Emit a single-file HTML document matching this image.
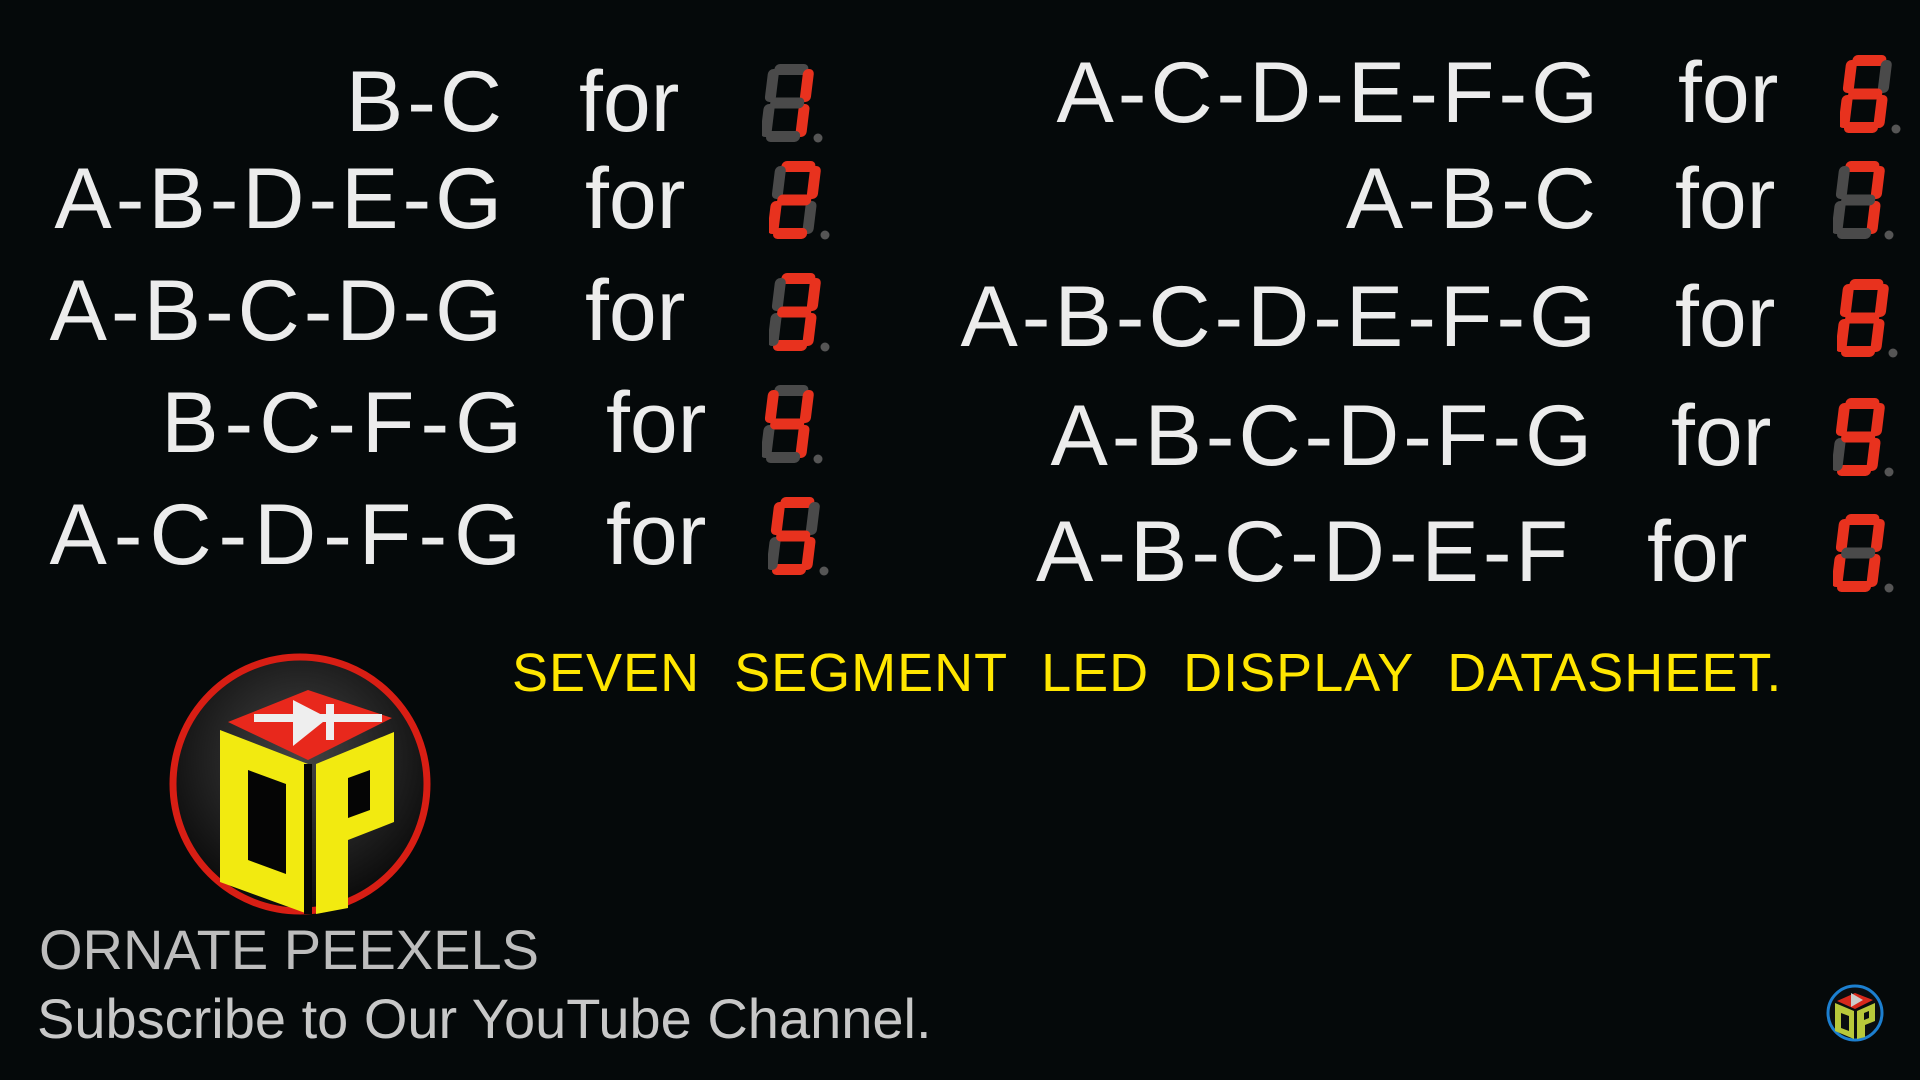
<!DOCTYPE html>
<html><head><meta charset="utf-8"><style>
html,body{margin:0;padding:0;background:#05090a;}
body{width:1920px;height:1080px;position:relative;overflow:hidden;font-family:"Liberation Sans",sans-serif;}
.t{position:absolute;color:#ececec;font-size:86px;line-height:86px;white-space:nowrap;letter-spacing:4px;}
.f{position:absolute;color:#ececec;font-size:86px;line-height:86px;white-space:nowrap;}
.d{position:absolute;width:62px;height:80px;}
</style></head><body>
<svg width="0" height="0" style="position:absolute">
<defs>
<rect id="sa" x="7" y="0" width="34" height="11" rx="5"/>
<rect id="sb" x="36" y="5" width="11" height="33" rx="5"/>
<rect id="sc" x="36" y="40" width="11" height="33" rx="5"/>
<rect id="sd" x="7" y="67" width="34" height="11" rx="5"/>
<rect id="se" x="1" y="40" width="11" height="33" rx="5"/>
<rect id="sf" x="1" y="5" width="11" height="33" rx="5"/>
<rect id="sg" x="7" y="33.5" width="34" height="11" rx="5"/>
</defs></svg>

<!-- Left column -->
<div class="t" style="right:1414px;top:59px">B-C</div>
<div class="f" style="left:579px;top:59px">for</div>
<div class="t" style="right:1414px;top:156px">A-B-D-E-G</div>
<div class="f" style="left:585px;top:156px">for</div>
<div class="t" style="right:1414px;top:268px">A-B-C-D-G</div>
<div class="f" style="left:585px;top:268px">for</div>
<div class="t" style="right:1392px;top:380px;letter-spacing:6px">B-C-F-G</div>
<div class="f" style="left:606px;top:380px">for</div>
<div class="t" style="right:1392px;top:492px;letter-spacing:7px">A-C-D-F-G</div>
<div class="f" style="left:606px;top:492px">for</div>

<!-- Right column -->
<div class="t" style="right:318px;top:50px">A-C-D-E-F-G</div>
<div class="f" style="left:1678px;top:50px">for</div>
<div class="t" style="right:320px;top:156px">A-B-C</div>
<div class="f" style="left:1675px;top:156px">for</div>
<div class="t" style="right:320px;top:274px">A-B-C-D-E-F-G</div>
<div class="f" style="left:1675px;top:274px">for</div>
<div class="t" style="right:324px;top:393px">A-B-C-D-F-G</div>
<div class="f" style="left:1671px;top:393px">for</div>
<div class="t" style="right:348px;top:509px">A-B-C-D-E-F</div>
<div class="f" style="left:1647px;top:509px">for</div>

<svg class="d" style="left:762px;top:63px" viewBox="0 0 62 80"><g transform="translate(6,1) skewX(-7)">
<use href="#sa" fill="#4a4a4a"/><use href="#sb" fill="#e8321e"/><use href="#sc" fill="#e8321e"/><use href="#sd" fill="#4a4a4a"/><use href="#se" fill="#4a4a4a"/><use href="#sf" fill="#4a4a4a"/><use href="#sg" fill="#4a4a4a"/></g><circle cx="56" cy="75" r="4.5" fill="#555"/></svg>
<svg class="d" style="left:769px;top:160px" viewBox="0 0 62 80"><g transform="translate(6,1) skewX(-7)">
<use href="#sa" fill="#e8321e"/><use href="#sb" fill="#e8321e"/><use href="#sc" fill="#4a4a4a"/><use href="#sd" fill="#e8321e"/><use href="#se" fill="#e8321e"/><use href="#sf" fill="#4a4a4a"/><use href="#sg" fill="#e8321e"/></g><circle cx="56" cy="75" r="4.5" fill="#555"/></svg>
<svg class="d" style="left:769px;top:272px" viewBox="0 0 62 80"><g transform="translate(6,1) skewX(-7)">
<use href="#sa" fill="#e8321e"/><use href="#sb" fill="#e8321e"/><use href="#sc" fill="#e8321e"/><use href="#sd" fill="#e8321e"/><use href="#se" fill="#4a4a4a"/><use href="#sf" fill="#4a4a4a"/><use href="#sg" fill="#e8321e"/></g><circle cx="56" cy="75" r="4.5" fill="#555"/></svg>
<svg class="d" style="left:762px;top:384px" viewBox="0 0 62 80"><g transform="translate(6,1) skewX(-7)">
<use href="#sa" fill="#4a4a4a"/><use href="#sb" fill="#e8321e"/><use href="#sc" fill="#e8321e"/><use href="#sd" fill="#4a4a4a"/><use href="#se" fill="#4a4a4a"/><use href="#sf" fill="#e8321e"/><use href="#sg" fill="#e8321e"/></g><circle cx="56" cy="75" r="4.5" fill="#555"/></svg>
<svg class="d" style="left:768px;top:496px" viewBox="0 0 62 80"><g transform="translate(6,1) skewX(-7)">
<use href="#sa" fill="#e8321e"/><use href="#sb" fill="#4a4a4a"/><use href="#sc" fill="#e8321e"/><use href="#sd" fill="#e8321e"/><use href="#se" fill="#4a4a4a"/><use href="#sf" fill="#e8321e"/><use href="#sg" fill="#e8321e"/></g><circle cx="56" cy="75" r="4.5" fill="#555"/></svg>

<svg class="d" style="left:1840px;top:54px" viewBox="0 0 62 80"><g transform="translate(6,1) skewX(-7)">
<use href="#sa" fill="#e8321e"/><use href="#sb" fill="#4a4a4a"/><use href="#sc" fill="#e8321e"/><use href="#sd" fill="#e8321e"/><use href="#se" fill="#e8321e"/><use href="#sf" fill="#e8321e"/><use href="#sg" fill="#e8321e"/></g><circle cx="56" cy="75" r="4.5" fill="#555"/></svg>
<svg class="d" style="left:1833px;top:160px" viewBox="0 0 62 80"><g transform="translate(6,1) skewX(-7)">
<use href="#sa" fill="#e8321e"/><use href="#sb" fill="#e8321e"/><use href="#sc" fill="#e8321e"/><use href="#sd" fill="#4a4a4a"/><use href="#se" fill="#4a4a4a"/><use href="#sf" fill="#4a4a4a"/><use href="#sg" fill="#4a4a4a"/></g><circle cx="56" cy="75" r="4.5" fill="#555"/></svg>
<svg class="d" style="left:1837px;top:278px" viewBox="0 0 62 80"><g transform="translate(6,1) skewX(-7)">
<use href="#sa" fill="#e8321e"/><use href="#sb" fill="#e8321e"/><use href="#sc" fill="#e8321e"/><use href="#sd" fill="#e8321e"/><use href="#se" fill="#e8321e"/><use href="#sf" fill="#e8321e"/><use href="#sg" fill="#e8321e"/></g><circle cx="56" cy="75" r="4.5" fill="#555"/></svg>
<svg class="d" style="left:1833px;top:397px" viewBox="0 0 62 80"><g transform="translate(6,1) skewX(-7)">
<use href="#sa" fill="#e8321e"/><use href="#sb" fill="#e8321e"/><use href="#sc" fill="#e8321e"/><use href="#sd" fill="#e8321e"/><use href="#se" fill="#4a4a4a"/><use href="#sf" fill="#e8321e"/><use href="#sg" fill="#e8321e"/></g><circle cx="56" cy="75" r="4.5" fill="#555"/></svg>
<svg class="d" style="left:1833px;top:513px" viewBox="0 0 62 80"><g transform="translate(6,1) skewX(-7)">
<use href="#sa" fill="#e8321e"/><use href="#sb" fill="#e8321e"/><use href="#sc" fill="#e8321e"/><use href="#sd" fill="#e8321e"/><use href="#se" fill="#e8321e"/><use href="#sf" fill="#e8321e"/><use href="#sg" fill="#4a4a4a"/></g><circle cx="56" cy="75" r="4.5" fill="#555"/></svg>

<div style="position:absolute;left:512px;top:646px;font-size:54px;line-height:54px;color:#ffe600;white-space:nowrap;word-spacing:18px;letter-spacing:1px">SEVEN SEGMENT LED DISPLAY DATASHEET.</div>

<svg style="position:absolute;left:168px;top:652px" width="264" height="264" viewBox="0 0 264 264">
<defs><radialGradient id="bg" cx="50%" cy="40%" r="60%"><stop offset="0" stop-color="#444"/><stop offset="1" stop-color="#0a0a0a"/></radialGradient></defs>
<circle cx="132" cy="132" r="127" fill="url(#bg)" stroke="#d81e14" stroke-width="7"/>
<polygon points="60,70 140,38 224,66 140,108" fill="#e8281c"/>
<line x1="86" y1="66" x2="214" y2="66" stroke="#eee" stroke-width="8"/>
<polygon points="125,48 160,66 125,94" fill="#eee"/>
<rect x="158" y="52" width="8" height="36" fill="#eee"/>
<polygon points="52,78 140,112 140,262 52,230" fill="#f2ea10"/>
<polygon points="80,118 118,132 118,222 80,208" fill="#050505"/>
<polygon points="148,112 226,80 226,170 180,188 180,256 148,262" fill="#f2ea10"/>
<polygon points="180,126 202,118 202,158 180,166" fill="#050505"/>
<line x1="140" y1="112" x2="140" y2="262" stroke="#050505" stroke-width="8"/>
</svg>

<div style="position:absolute;left:39px;top:922px;font-size:56px;line-height:56px;color:#bdbdbd;white-space:nowrap">ORNATE PEEXELS</div>
<div style="position:absolute;left:37px;top:991px;font-size:56px;line-height:56px;color:#c8c8c8;white-space:nowrap">Subscribe to Our YouTube Channel.</div>

<svg style="position:absolute;left:1825px;top:983px" width="60" height="60" viewBox="0 0 60 60">
<circle cx="30" cy="30" r="27" fill="#0a0d10" stroke="#1c7fd0" stroke-width="3"/>
<polygon points="12,18 30,10 48,17 30,26" fill="#d8281c"/>
<polygon points="26,10 38,17 26,24" fill="#ccc"/>
<polygon points="10,20 29,28 29,56 10,48" fill="#b8c83a"/>
<polygon points="16,30 24,33 24,48 16,45" fill="#0a0d10"/>
<polygon points="32,28 50,20 50,38 40,42 40,54 32,56" fill="#b8c83a"/>
<polygon points="39,30 44,28 44,35 39,37" fill="#0a0d10"/>
</svg>
</body></html>
